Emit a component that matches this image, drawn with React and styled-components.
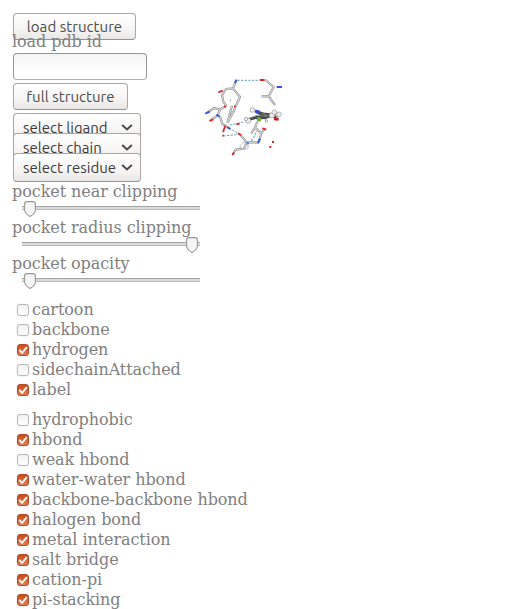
import React from "react";
import styled, { createGlobalStyle } from "styled-components";

const Global = createGlobalStyle`
  * { box-sizing: border-box; }
  html, body { margin: 0; height: 609px; overflow: hidden; background: #fff; }
`;

const Page = styled.main`
  display: flex;
  width: 512px;
  height: 609px;
  overflow: hidden;
  font: 16px/20px "DejaVu Serif", serif;
  letter-spacing: -0.07px;
  color: #808080;
`;

const Controls = styled.section`
  display: flex;
  flex-direction: column;
  align-items: flex-start;
  flex: 0 0 205px;
  min-width: 0;
  padding: 13px 0 0 12px;
  white-space: nowrap;
  > * { flex: none; }
`;

const Button = styled.button`
  width: ${(p) => p.$width}px;
  height: 27px;
  margin: 0 0 ${(p) => p.$gap}px 1px;
  padding: 0;
  border: 1px solid #aaa7a4;
  border-bottom-color: #969390;
  border-radius: 4px;
  background: linear-gradient(#fff, #f6f5f4 60%, #e9e7e5);
  color: #4c4c4c;
  font: 15px/25px Ubuntu, "Noto Sans", sans-serif;
  letter-spacing: 0.05px;
`;

const Label = styled.label`
  display: block;
  height: 20px;
  position: relative;
`;

const Field = styled.input`
  width: 134px;
  height: 27px;
  margin: 1px 0 3px 1px;
  border: 1px solid #989694;
  border-bottom-color: #b2b0ae;
  border-radius: 4px;
  background: linear-gradient(#f3f3f3, #fff 65%);
`;

const Selects = styled.div`
  display: grid;
  grid-auto-rows: 20px;
  height: 69px;
  margin-left: 1px;
`;

const Select = styled.div`
  display: flex;
  align-items: center;
  justify-content: space-between;
  width: 128px;
  height: 29px;
  padding: 0 7px 0 9px;
  border: 1px solid #aaa7a4;
  border-bottom-color: #969390;
  border-radius: 4px;
  background: linear-gradient(#fff, #f6f5f4 60%, #e9e7e5);
  color: #3c3c3c;
  font: 15px/26px Ubuntu, "Noto Sans", sans-serif;
  letter-spacing: 0;
`;

const Slider = styled.div`
  display: flex;
  align-items: center;
  width: 178px;
  height: 16px;
  margin: -1px 0 1px 10px;
  padding-left: ${(p) => (p.$end ? 164 : 2)}px;
  background: linear-gradient(#a5a5a5 0 1px, #dadada 1px 3px, #bbb 3px) 0 5px / 100% 4px no-repeat;
`;

const Checks = styled.div`
  display: flex;
  flex-direction: column;
  margin: ${(p) => p.$top}px 0 0 5px;
`;

const CheckRow = styled.label`
  display: flex;
  gap: 3px;
  height: 20px;
`;

const Box = styled.span`
  display: block;
  width: 12px;
  height: 12px;
  margin-top: 4px;
  border: 1px solid ${(p) => (p.$on ? "#b0492a" : "#bcbab8")};
  border-radius: 3px;
  background: ${(p) => (p.$on ? "linear-gradient(#cc4b1b, #e27c53)" : "linear-gradient(#f1f1f1, #fff)")};
  box-shadow: 0 0 1px #bbb;
  svg { display: block; margin: -1px; }
`;

const Viewer = styled.section`
  padding-top: 70px;
  margin-left: -5px;
  svg { display: block; }
`;

const Thumb = () => (
  <svg width="12" height="16" viewBox="0 0 12 16">
    <path d="M3 .6h6q2.4 0 2.4 2.4v6Q11 12.7 6 15.4 1 12.7.6 9V3Q.6.6 3 .6Z" fill="#f5f5f5" stroke="#989898" strokeWidth="1.1" />
  </svg>
);

const Chevron = () => (
  <svg width="12" height="8" viewBox="0 0 12 8">
    <path d="m1.2 1 4.8 4.5L10.8 1" fill="none" stroke="#4b4b4b" strokeWidth="2" />
  </svg>
);

function Check({ label, on }) {
  return (
    <CheckRow>
      <Box $on={on}>
        {on && (
          <svg width="12" height="12" viewBox="0 0 12 12">
            <path d="m2.3 5.8 2.8 3 4.8-5.7" fill="none" stroke="#fff" strokeWidth="1.8" />
          </svg>
        )}
      </Box>
      {label}
    </CheckRow>
  );
}

const bonds =
  "M107 34 99 55 120 81 108 107 M99 55 78 57 66 76 70 95 79 108 M108 107 101 124 82 159 M96 107 89 133 82 159 M75 109 60 119 42 114 22 128 M60 119 53 136 M53 136 31 151 M60 140 67 162 86 174 M197 30 221 51 206 79 185 79 M206 79 225 105 M172 155 165 173 154 190 M165 173 184 190 193 176 M184 190 177 213 M120 193 140 217 175 217 M140 217 132 236 107 239 98 254";

/* Bonds are grouped by the element colours at their ends. */
const Molecule = () => (
  <svg width="95" height="90" viewBox="0 0 285 270" fill="none">
    <g stroke="#4c8fb2" strokeWidth="2.5" strokeDasharray="7 4">
      <path d="M112 31h66M87 175l30 16M70 198l47-5M90 165l42-9M155 214l15-31" />
    </g>
    <path d={bonds} stroke="#8a8a8a" strokeWidth="6.5" strokeLinejoin="round" />
    <path d={bonds} stroke="#cfcfcf" strokeWidth="3.8" strokeLinejoin="round" />
    <g stroke="#e02828" strokeWidth="5.5">
      <path d="m55 67 13-5M28 153l12-5M76 167l-7 19M67 197h5M109 163l10-2M114 190l10 6M97 256l5-9M179 30h15M187 175l12 4M72 110h7M102 109h5" />
      <path d="M216 216h6M208 231h6" />
    </g>
    <g stroke="#3457e0" strokeWidth="6">
      <path d="m105 39 5-10M16 131l13-6M49 134l10 6M82 171l9 6M230 51h16M174 220l6-14M139 220h7" />
    </g>
    <g stroke="#484848" strokeWidth="9" strokeLinejoin="round">
      <path d="m144 149 24-7 28 1 17-7 16 6M170 126l20 6 24 3 14-8M178 129l14 14" />
    </g>
    <path d="m150 144 26-9 25 5M185 130l28 10" stroke="#858585" strokeWidth="3" />
    <path d="m165 123 14 4" stroke="#304cd5" strokeWidth="10" />
    <path d="m222 146 14 2" stroke="#c81919" strokeWidth="9" />
    <circle cx="177" cy="148" r="7" fill="#71ab42" />
    <g fill="#eee" stroke="#8b8b8b" strokeWidth="1.8">
      <circle cx="157" cy="120" r="7" />
      <circle cx="144" cy="152" r="8" />
      <circle cx="138" cy="147" r="5" />
      <circle cx="216" cy="136" r="8" />
      <circle cx="223" cy="127" r="7" />
      <circle cx="237" cy="133" r="7" />
      <circle cx="199" cy="153" r="4" />
    </g>
    <path d="m120 227 11-11 12 6 2 11-13 6-11-5Z" stroke="#bbb" strokeWidth="3" />
    <path d="M91 87v8M165 193v7M154 207v7" stroke="#70af76" strokeWidth="2" />
  </svg>
);

const display = [["cartoon"], ["backbone"], ["hydrogen", true], ["sidechainAttached"], ["label", true]];
const interactions = [
  ["hydrophobic"], ["hbond", true], ["weak hbond"], ["water-water hbond", true],
  ["backbone-backbone hbond", true], ["halogen bond", true], ["metal interaction", true],
  ["salt bridge", true], ["cation-pi", true], ["pi-stacking", true],
];

export default function App() {
  return (
    <Page>
      <Global />
      <Controls>
        <Button $width={123} $gap={-8}>load structure</Button>
        <Label>load pdb id</Label>
        <Field aria-label="pdb id" />
        <Button $width={115} $gap={3}>full structure</Button>
        <Selects>
          <Select>select ligand<Chevron /></Select>
          <Select>select chain<Chevron /></Select>
          <Select>select residue<Chevron /></Select>
        </Selects>
        <Label>pocket near clipping</Label>
        <Slider><Thumb /></Slider>
        <Label>pocket radius clipping</Label>
        <Slider $end><Thumb /></Slider>
        <Label>pocket opacity</Label>
        <Slider><Thumb /></Slider>
        <Checks $top={10}>
          {display.map(([label, on]) => <Check key={label} label={label} on={on} />)}
        </Checks>
        <Checks $top={10}>
          {interactions.map(([label, on]) => <Check key={label} label={label} on={on} />)}
        </Checks>
      </Controls>
      <Viewer><Molecule /></Viewer>
    </Page>
  );
}
